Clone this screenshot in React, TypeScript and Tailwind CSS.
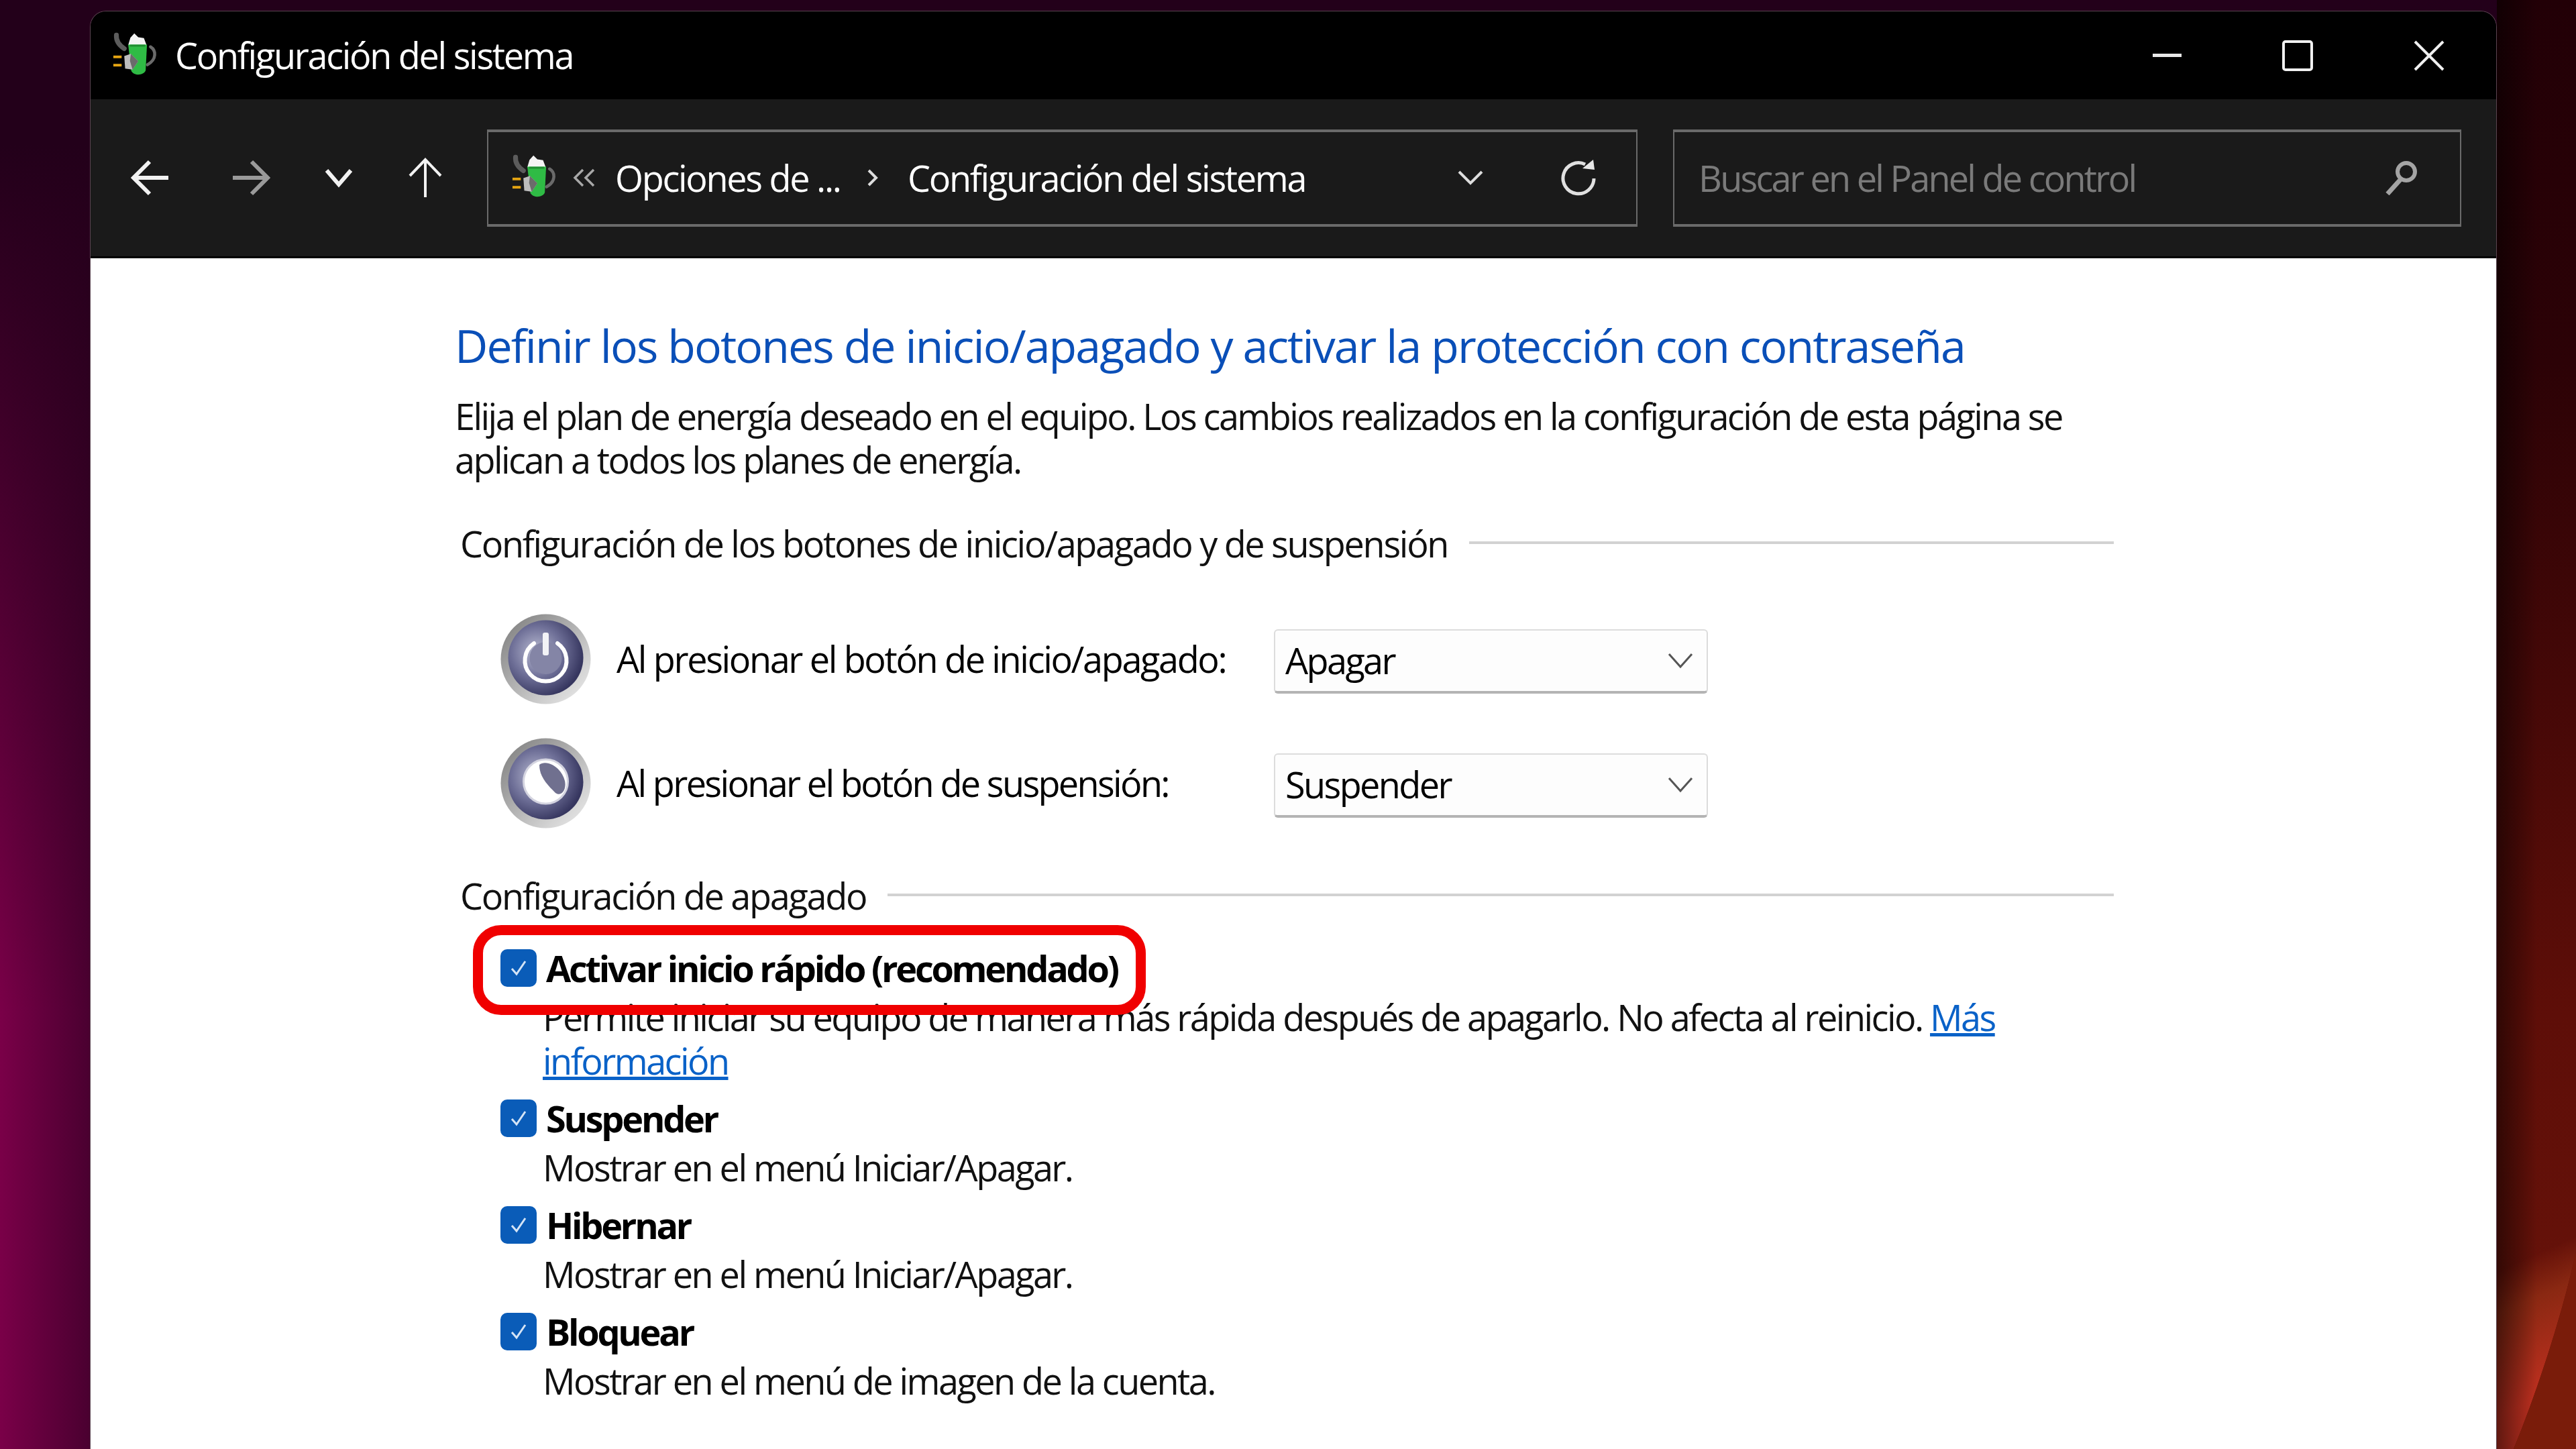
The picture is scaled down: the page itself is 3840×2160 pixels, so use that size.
import React from 'react';

const sans = "font-['Open_Sans','Noto_Sans',sans-serif]";

const BatteryIcon = () => (
  <svg width="70" height="72" viewBox="50 38 215 221">
    <path d="M70 54 C68 78 82 100 106 116" fill="none" stroke="#5c5c5c" strokeWidth="22" strokeLinecap="round" />
    <path d="M226 108 C252 124 256 166 212 190" fill="none" stroke="#6a6a6a" strokeWidth="14" strokeLinecap="round" />
    <path d="M134 66 L152 46 L170 64 L196 68 L208 100 L124 100 Z" fill="#f4f4f4" />
    <path d="M124 98 L210 98 L204 216 C194 240 152 242 138 218 Z" fill="#2fbb45" />
    <rect x="132" y="98" width="70" height="9" fill="#1f8d30" />
    <path d="M106 150 L136 140 L170 174 L144 212 L110 208 Z" fill="#bdbdbd" />
    <path d="M136 140 L170 174 L144 212 L132 172 Z" fill="#6b6b6b" />
    <rect x="56" y="148" width="38" height="12" fill="#e4a412" />
    <rect x="56" y="186" width="38" height="12" fill="#e4a412" />
  </svg>
);

const Arrow = ({ d, color = '#f2f2f2', w = 6 }: { d: string; color?: string; w?: number }) => (
  <svg width="70" height="70" viewBox="0 0 70 70" fill="none" stroke={color} strokeWidth={w}>
    <path d={d} />
  </svg>
);

const PowerIcon = ({ sleep }: { sleep?: boolean }) => (
  <svg width="135" height="139" viewBox="0 0 135 139">
    <defs>
      <radialGradient id={sleep ? 'discB' : 'discA'} cx="38%" cy="42%" r="62%">
        <stop offset="0%" stopColor="#b9bbd2" />
        <stop offset="55%" stopColor="#6e6f97" />
        <stop offset="100%" stopColor="#36365f" />
      </radialGradient>
      <linearGradient id={sleep ? 'ringB' : 'ringA'} x1="0" y1="0" x2="1" y2="1">
        <stop offset="0%" stopColor="#7a7a7a" />
        <stop offset="100%" stopColor="#f0f0f0" />
      </linearGradient>
    </defs>
    <circle cx="67.5" cy="69.5" r="67" fill={`url(#${sleep ? 'ringB' : 'ringA'})`} />
    <circle cx="67.5" cy="67.5" r="56" fill={`url(#${sleep ? 'discB' : 'discA'})`} />
    {sleep ? (
      <>
        <circle cx="67.5" cy="67" r="33" fill="#ffffff" stroke="#d4d4e0" strokeWidth="3" />
        <path d="M58 42 C68 34 90 44 96 66 C99 80 90 90 82 84 C70 72 58 60 58 42 Z" fill="#70708f" />
      </>
    ) : (
      <>
        <circle cx="67.5" cy="68" r="24" fill="#8485a6" />
        <path d="M50 46 A31 31 0 1 0 85 46" fill="none" stroke="#ffffff" strokeWidth="6" strokeLinecap="round" />
        <rect x="63" y="30" width="9" height="34" rx="3" fill="#f2f2f6" />
      </>
    )}
  </svg>
);

const Check = () => (
  <div className="w-[54px] h-[56px] shrink-0 rounded-[10px] bg-[#0a5cb8] flex items-center justify-center">
    <svg width="34" height="34" viewBox="0 0 34 34" fill="none" stroke="#d4e4f6" strokeWidth="3">
      <path d="M7 18 L14 26 L27 7" />
    </svg>
  </div>
);

const Select = ({ value }: { value: string }) => (
  <div className="mt-[6px] w-[647px] h-[96px] bg-[#fdfdfd] border-2 border-[#dcdcdc] border-b-[4px] border-b-[#b4b4b4] rounded-[6px] flex items-center justify-between pl-[15px] pr-[19px] text-[54px] tracking-[-2.6px] text-black">
    <span>{value}</span>
    <svg width="40" height="26" viewBox="0 0 40 26" fill="none" stroke="#555" strokeWidth="3">
      <path d="M3 3 L20 22 L37 3" />
    </svg>
  </div>
);

const Section = ({ title }: { title: string }) => (
  <div className="flex items-center gap-[32px] h-[65px] w-[2473px] text-[54px] tracking-[-2.3px] text-[#111] pl-[8px]">
    <span className="shrink-0">{title}</span>
    <div className="flex-1 h-[4px] bg-[#d2d2d2] -translate-y-[2px]" />
  </div>
);

const PowerRow = ({ sleep, label, value }: { sleep?: boolean; label: string; value: string }) => (
  <div className="flex items-center h-[139px] pl-[68px]">
    <PowerIcon sleep={sleep} />
    <span className={`w-[1018px] pl-[38px] text-[54px] text-black ${sleep ? 'tracking-[-2.65px]' : 'tracking-[-2.35px]'}`}>{label}</span>
    <Select value={value} />
  </div>
);

const Option = ({ label, children }: { label: string; children: React.ReactNode }) => (
  <div className="pl-[68px]">
    <div className="flex items-center gap-[14px] h-[66px]">
      <Check />
      <span className="text-[54px] font-bold tracking-[-3.25px] text-black">{label}</span>
    </div>
    <div className="pt-[8px] pl-[63px] w-[2368px] text-[54px] leading-[65px] tracking-[-2.55px] text-[#111]">{children}</div>
  </div>
);

export default function App() {
  return (
    <div className={`${sans} relative w-[3840px] h-[2160px] overflow-hidden bg-[linear-gradient(90deg,#7a0048_0%,#4a0030_3.5%,#2a0010_50%,#2a0006_100%)]`}>
      <div className="absolute inset-0 bg-[linear-gradient(180deg,#23001a_0%,#23001a_10%,rgba(35,0,26,0)_70%)]" />

      {/* wallpaper streak on the right */}
      <svg className="absolute right-0 top-0" width="118" height="2160" viewBox="0 0 118 2160">
        <defs>
          <linearGradient id="wallBase" x1="0" y1="0" x2="0" y2="1">
            <stop offset="0%" stopColor="#220006" />
            <stop offset="25%" stopColor="#2c0206" />
            <stop offset="70%" stopColor="#5e0e08" />
            <stop offset="100%" stopColor="#6a140a" />
          </linearGradient>
          <linearGradient id="wallGlow" gradientUnits="userSpaceOnUse" x1="70" y1="2080" x2="-10" y2="1900">
            <stop offset="0%" stopColor="#c03020" />
            <stop offset="70%" stopColor="#8a2812" />
            <stop offset="100%" stopColor="#8a2812" stopOpacity="0" />
          </linearGradient>
          <linearGradient id="wallShade" x1="0" y1="0" x2="1" y2="0">
            <stop offset="0%" stopColor="#000000" stopOpacity="0.5" />
            <stop offset="100%" stopColor="#000000" stopOpacity="0" />
          </linearGradient>
        </defs>
        <rect width="118" height="2160" fill="url(#wallBase)" />
        <path d="M0 1780 L118 1780 L118 1866 C100 1950 62 2070 25 2160 L0 2160 Z" fill="url(#wallGlow)" />
        <rect width="60" height="2160" fill="url(#wallShade)" />
        <path d="M118 1866 C100 1950 62 2070 25 2160 L118 2160 Z" fill="#7a1c0a" />
      </svg>

      {/* the reference is an upscaled capture, hence the slight softening */}
      <div className="absolute left-[134px] top-[16px] w-[3588px] h-[2144px] rounded-t-[24px] overflow-hidden flex flex-col border-x border-t border-[#5a4450] blur-[0.7px]">
        {/* title bar */}
        <div className="h-[131px] shrink-0 bg-black flex items-center text-white">
          <div className="ml-[32px] mr-[24px]"><BatteryIcon /></div>
          <span className="text-[54px] tracking-[-2.3px]">Configuración del sistema</span>
          <div className="ml-auto flex items-center gap-[150px] mr-[77px]">
            <div className="w-[43px] h-[5px] bg-[#e8e8e8]" />
            <div className="w-[46px] h-[46px] border-[4px] border-[#f0f0f0] rounded-[5px]" />
            <svg width="46" height="46" viewBox="0 0 46 46" stroke="#f0f0f0" strokeWidth="4">
              <path d="M2 2 L44 44 M44 2 L2 44" />
            </svg>
          </div>
        </div>

        {/* toolbar */}
        <div className="h-[237px] shrink-0 bg-[#1a1a1a] border-b-[3px] border-b-black flex items-center">
          <div className="w-[591px] shrink-0 flex items-center pl-[55px] gap-[78px]">
            <Arrow d="M61 35 L9 35 M33 11 L9 35 L33 59" />
            <Arrow d="M9 35 L61 35 M37 11 L61 35 L37 59" color="#9a9a9a" />
            <div className="-ml-[16px] -mr-[19px]"><Arrow d="M17 24 L35 45 L53 24" /></div>
            <Arrow d="M35 64 L35 8 M12 32 L35 8 L58 32" w={4} />
          </div>

          <div className="w-[1715px] h-[145px] shrink-0 border-2 border-[#6a6a6a] border-t-[4px] border-b-[4px] flex items-center text-white">
            <div className="ml-[34px]"><BatteryIcon /></div>
            <svg className="ml-[21px]" width="36" height="28" viewBox="0 0 36 28" fill="none" stroke="#a8a8a8" strokeWidth="3.5">
              <path d="M16 2 L4 14 L16 26 M32 2 L20 14 L32 26" />
            </svg>
            <span className="ml-[28px] text-[54px] tracking-[-2.3px] w-[334px] whitespace-nowrap">Opciones de ...</span>
            <svg className="ml-[42px]" width="16" height="26" viewBox="0 0 16 26" fill="none" stroke="#ddd" strokeWidth="4">
              <path d="M2 2 L13 13 L2 24" />
            </svg>
            <span className="ml-[44px] text-[54px] tracking-[-2.3px] whitespace-nowrap">Configuración del sistema</span>
            <svg className="ml-auto mr-[114px]" width="38" height="22" viewBox="0 0 38 22" fill="none" stroke="#ddd" strokeWidth="4">
              <path d="M2 2 L19 19 L36 2" />
            </svg>
            <svg className="mr-[56px]" width="58" height="56" viewBox="0 0 58 56" fill="none" stroke="#e0e0e0" strokeWidth="5">
              <path d="M38 8 A23 23 0 1 0 51 29" />
              <path d="M34 14 L52 16 L50 1 Z" fill="#e8e8e8" stroke="none" />
            </svg>
          </div>

          <div className="ml-[53px] w-[1175px] h-[145px] shrink-0 border-2 border-[#6a6a6a] border-t-[4px] border-b-[4px] flex items-center pl-[36px] pr-[62px] justify-between">
            <span className="text-[54px] tracking-[-2.75px] text-[#7a7a7a]">Buscar en el Panel de control</span>
            <svg width="50" height="52" viewBox="0 0 50 52" fill="none" stroke="#a4a4a4" strokeWidth="6">
              <circle cx="32" cy="17" r="13" />
              <path d="M23 29 L4 50" strokeWidth="7" />
            </svg>
          </div>
        </div>

        {/* content */}
        <div className="flex-1 bg-white relative pl-[543px] pt-[92px]">
          <h1 className="text-[68px] leading-[76px] tracking-[-1.9px] text-[#0a4fb8] whitespace-nowrap">
            Definir los botones de inicio/apagado y activar la protección con contraseña
          </h1>
          <p className="mt-[35px] w-[2440px] text-[54px] leading-[65px] tracking-[-2.55px] text-[#111]">
            Elija el plan de energía deseado en el equipo. Los cambios realizados en la configuración de esta página se aplican a todos los planes de energía.
          </p>

          <div className="mt-[60px]"><Section title="Configuración de los botones de inicio/apagado y de suspensión" /></div>
          <div className="mt-[70px] flex flex-col gap-[46px]">
            <PowerRow label="Al presionar el botón de inicio/apagado:" value="Apagar" />
            <PowerRow sleep label="Al presionar el botón de suspensión:" value="Suspender" />
          </div>
          <div className="mt-[66px]"><Section title="Configuración de apagado" /></div>

          <div className="mt-[42px] flex flex-col gap-[20px]">
            <Option label="Activar inicio rápido (recomendado)">
              Permite iniciar su equipo de manera más rápida después de apagarlo. No afecta al reinicio.{' '}
              <span className="text-[#0a62c8] underline">Más información</span>
            </Option>
            <Option label="Suspender">Mostrar en el menú Iniciar/Apagar.</Option>
            <Option label="Hibernar">Mostrar en el menú Iniciar/Apagar.</Option>
            <Option label="Bloquear">Mostrar en el menú de imagen de la cuenta.</Option>
          </div>

          {/* red annotation drawn over the option */}
          <div className="absolute left-[570px] top-[994px] w-[1003px] h-[134px] border-[15px] border-[#f00000] rounded-[42px]" />
        </div>
      </div>
    </div>
  );
}
